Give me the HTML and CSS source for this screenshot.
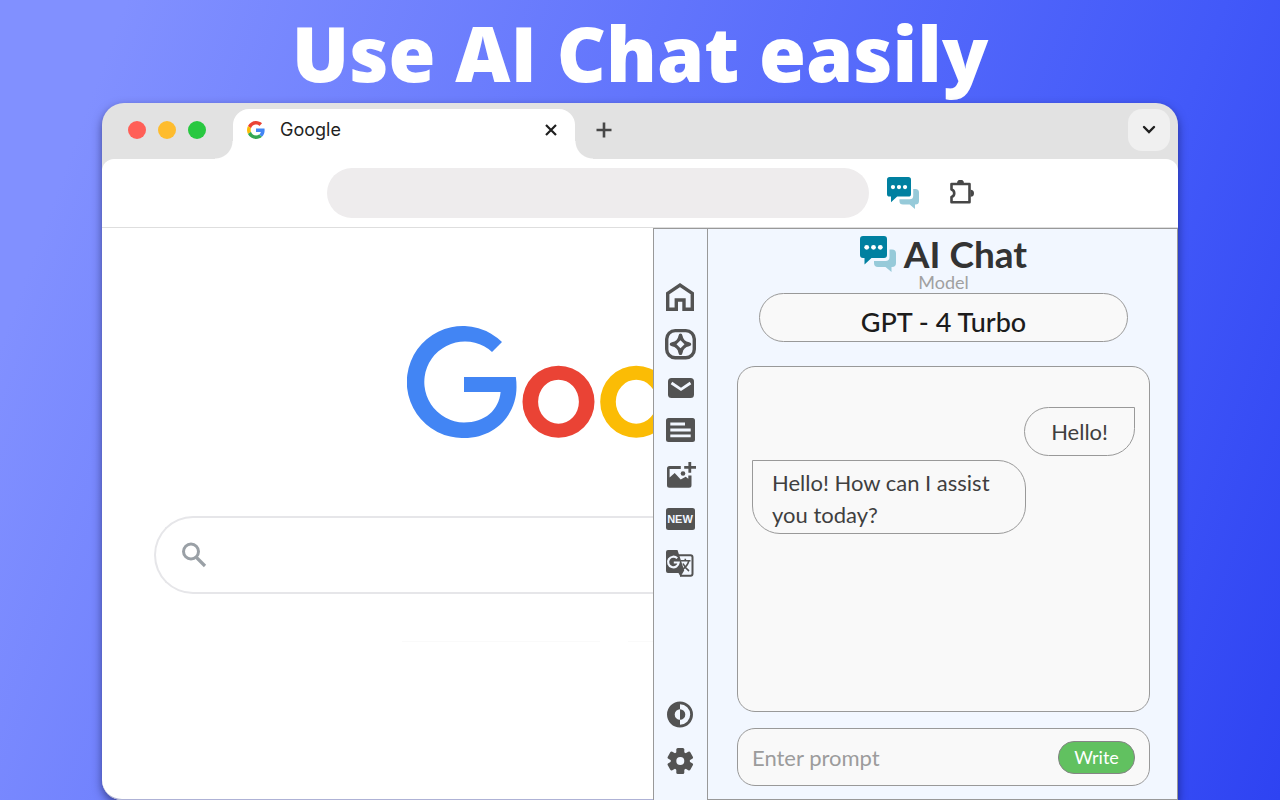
FILE: index.html
```html
<!DOCTYPE html>
<html lang="en">
<head>
    <meta charset="UTF-8">
    <meta name="viewport" content="width=device-width, initial-scale=1.0">

    <title>Use AI Chat easily</title>

    <link rel="stylesheet" href="styles.css">
</head>
<body>
    <!-- Shared chat logo -->
    <svg class="defs" aria-hidden="true">
        <symbol id="chat-logo" viewBox="0 0 36 36">
            <path fill="#0080a0" d="M3 0h21a3 3 0 0 1 3 3v16a3 3 0 0 1-3 3H11.500L4.500 28.500V22H3a3 3 0 0 1-3-3V3a3 3 0 0 1 3-3z"/>
            <g fill="#fff">
                <circle cx="6.700" cy="11.300" r="2.400"/>
                <circle cx="13.500" cy="11.300" r="2.400"/>
                <circle cx="20.300" cy="11.300" r="2.400"/>
            </g>
            <path fill="#96cad9" d="M29.500 13.500H32a4 4 0 0 1 4 4V27a4 4 0 0 1-4 4h-.500v5L25.500 31H18a4 4 0 0 1-4-4v-2h11.500a4 4 0 0 0 4-4z"/>
        </symbol>
    </svg>

    <h1 class="headline">Use AI Chat easily</h1>

    <div class="browser">
        <div class="tab-bar">
            <div class="window-dots">
                <span class="dot red"></span>
                <span class="dot yellow"></span>
                <span class="dot green"></span>
            </div>
            <div class="tab">
                <svg class="favicon" viewBox="0 0 48 48" aria-hidden="true">
                    <path fill="#ea4335" d="M24 9.500c3.540 0 6.710 1.220 9.210 3.600l6.850-6.850C35.900 2.380 30.470 0 24 0 14.620 0 6.510 5.380 2.560 13.220l7.980 6.190C12.430 13.720 17.740 9.500 24 9.500z"/>
                    <path fill="#4285f4" d="M46.980 24.550c0-1.570-.15-3.090-.38-4.550H24v9.020h12.940c-.58 2.960-2.260 5.480-4.780 7.180l7.730 6c4.510-4.180 7.090-10.360 7.090-17.650z"/>
                    <path fill="#fbbc05" d="M10.530 28.590c-.48-1.450-.76-2.990-.76-4.590s.27-3.140.76-4.590l-7.980-6.190C.92 16.460 0 20.120 0 24s.92 7.540 2.560 10.780z"/>
                    <path fill="#34a853" d="M24 48c6.480 0 11.930-2.130 15.890-5.810l-7.730-6c-2.150 1.450-4.920 2.300-8.160 2.300-6.260 0-11.570-4.220-13.470-9.910l-7.980 6.190C6.510 42.620 14.620 48 24 48z"/>
                </svg>
                <span class="tab-title">Google</span>
                <button class="icon-button close-tab" aria-label="Close tab">
                    <svg width="12" height="12" viewBox="0 0 12 12"><path d="M1 1l10 10M11 1L1 11" stroke="#1f1f1f" stroke-width="2.200"/></svg>
                </button>
            </div>
            <button class="icon-button new-tab" aria-label="New tab">
                <svg width="16" height="16" viewBox="0 0 16 16"><path d="M8 0.500v15M0.500 8h15" stroke="#474747" stroke-width="2.600"/></svg>
            </button>
            <button class="icon-button tab-menu" aria-label="Search tabs">
                <svg width="14" height="10" viewBox="0 0 14 10"><path d="M2 2l5 5 5-5" fill="none" stroke="#1f1f1f" stroke-width="2.400" stroke-linecap="round"/></svg>
            </button>
        </div>

        <div class="toolbar">
            <input class="address" type="text" aria-label="Address">
            <button class="icon-button" aria-label="AI Chat">
                <svg width="32" height="32"><use href="#chat-logo"/></svg>
            </button>
            <button class="icon-button extensions" aria-label="Extensions">
                <svg width="26" height="26" viewBox="0 0 26 26">
                    <path d="M2.500 4H20.500V22.300H2.500V17a4 4 0 0 0 0-7.600z" fill="none" stroke="#474747" stroke-width="2.600" stroke-linejoin="round"/>
                    <path d="M8 3.200a3.500 3.500 0 0 1 7 0zM21.500 9.700a3.500 3.500 0 0 1 0 7z" fill="#474747"/>
                </svg>
            </button>
        </div>

        <div class="content">
            <main class="page">
                <svg class="google-logo" width="266" height="112" viewBox="407 326 266 112" role="img" aria-label="Google">
                    <path fill="#4285f4" d="M502 342A56 56 0 1 0 464 438C496 438 516.500 414 516.500 387Q516.500 381 515.800 377H464V392H500.600C499 410 485 422.500 464 422.500A40.500 40.500 0 1 1 492 352Z"/>
                    <path fill="#ea4335" fill-rule="evenodd" d="M522.500 401.700a36 36 0 1 0 72 0a36 36 0 1 0-72 0zM538.100 401.700a20.400 22 0 1 1 40.800 0a20.400 22 0 1 1-40.800 0z"/>
                    <path fill="#fbbc05" fill-rule="evenodd" d="M600.200 401.700a36 36 0 1 0 72 0a36 36 0 1 0-72 0zM615.800 401.700a20.400 22 0 1 1 40.800 0a20.400 22 0 1 1-40.800 0z"/>
                </svg>
                <div class="search">
                    <svg width="26" height="26" viewBox="0 0 26 26" aria-hidden="true">
                        <circle cx="10" cy="9.500" r="7.500" fill="none" stroke="#9aa0a6" stroke-width="3"/>
                        <path d="M15.500 15.500l8.500 8.500" stroke="#9aa0a6" stroke-width="3.200"/>
                    </svg>
                    <input type="text" aria-label="Search">
                </div>
                <div class="page-lines">
                    <span></span>
                    <span></span>
                </div>
            </main>

            <nav class="sidebar" aria-label="AI Chat tools">
                <button class="icon-button" aria-label="Home">
                    <svg class="tool" viewBox="0 0 32 32"><path d="M3.700 27.300V11.400L16 3l12.300 8.400v15.900H20V18h-7.700v9.300z" fill="none" stroke="#535353" stroke-width="3.400"/></svg>
                </button>
                <button class="icon-button" aria-label="Assistant">
                    <svg class="tool" viewBox="0 0 32 32">
                        <rect x="2.700" y="4.600" width="27.600" height="27.200" rx="8.500" fill="none" stroke="#535353" stroke-width="3.400"/>
                        <path fill="#535353" fill-rule="evenodd" d="M16.500 7.500q1.600 0 2 2.200q1 5.600 6.600 6.600q2.200.4 2.200 2t-2.200 2q-5.600 1-6.600 6.600q-.4 2.200-2 2.200t-2-2.200q-1-5.600-6.600-6.600q-2.200-.4-2.200-2t2.200-2q5.600-1 6.600-6.600q.4-2.200 2-2.200zM16.500 14.300l-4 4l4 4l4-4z"/>
                    </svg>
                </button>
                <button class="icon-button" aria-label="Mail">
                    <svg class="tool" viewBox="0 0 32 32">
                        <rect x="4" y="8" width="26" height="20" rx="3.500" fill="#535353"/>
                        <path d="M7.500 13l9.500 6.300l9.500-6.300" fill="none" stroke="#f2f7ff" stroke-width="2.800"/>
                    </svg>
                </button>
                <button class="icon-button" aria-label="Article">
                    <svg class="tool" viewBox="0 0 32 32">
                        <rect x="2" y="4" width="29" height="24" rx="2.500" fill="#535353"/>
                        <path d="M6.300 10H21M6.300 16h20.400M6.300 21.800h20.400" stroke="#f2f7ff" stroke-width="2.800"/>
                    </svg>
                </button>
                <button class="icon-button" aria-label="Add image">
                    <svg class="tool" viewBox="0 0 32 32">
                        <path fill="#535353" d="M5.500 8H16.800v3H5.600v8.500L10.700 15l6 6.500l5-2.800l2.600 2V17.500h3.200v9.700a2.500 2.500 0 0 1-2.500 2.500H5.500A2.500 2.500 0 0 1 3 27.200V10.500A2.500 2.500 0 0 1 5.500 8z"/>
                        <circle cx="19" cy="15.500" r="2.300" fill="#535353"/>
                        <path d="M25.800 4v10.800M20.200 9.300H32" stroke="#535353" stroke-width="2.800"/>
                    </svg>
                </button>
                <button class="icon-button" aria-label="New">
                    <svg class="tool" viewBox="0 0 32 32">
                        <rect x="2" y="6" width="29" height="22" rx="2.500" fill="#535353"/>
                        <text class="new-label" x="16" y="21" text-anchor="middle">NEW</text>
                    </svg>
                </button>
                <button class="icon-button" aria-label="Translate">
                    <svg class="tool" viewBox="0 0 32 32">
                        <path d="M14 9.200h12.500a2 2 0 0 1 2 2v16.500a2 2 0 0 1-2 2H16" fill="none" stroke="#535353" stroke-width="2"/>
                        <path fill="#535353" d="M4 4h9.500l6.700 20.500L16.500 30.700L14.500 27H4a2 2 0 0 1-2-2V6a2 2 0 0 1 2-2z"/>
                        <path d="M13.200 12.300a5.300 5.300 0 1 0 1.500 4.200H9.800" fill="none" stroke="#f2f7ff" stroke-width="2.200"/>
                        <path d="M17 14.800h9.500M21.300 12.800v2M24.800 15q-1.300 5-6.300 8.500M19 17.500q2 4.500 6 7.500" fill="none" stroke="#535353" stroke-width="1.600"/>
                    </svg>
                </button>
                <span class="spacer"></span>
                <button class="icon-button" aria-label="Theme">
                    <svg class="tool" viewBox="0 0 32 32">
                        <circle cx="16" cy="14.500" r="11.600" fill="none" stroke="#535353" stroke-width="2.800"/>
                        <path fill="#535353" d="M16 2.500v6.700a5.300 5.300 0 0 0 0 10.600v6.700a12 12 0 0 1 0-24zM16 9.200a5.300 5.300 0 0 1 0 10.600z"/>
                    </svg>
                </button>
                <button class="icon-button" aria-label="Settings">
                    <svg class="tool" viewBox="0 0 32 32">
                        <g fill="#535353">
                            <circle cx="16.300" cy="17" r="9.600"/>
                            <rect x="12.300" y="4" width="8" height="26" rx="1.500"/>
                            <rect x="12.300" y="4" width="8" height="26" rx="1.500" transform="rotate(60 16.300 17)"/>
                            <rect x="12.300" y="4" width="8" height="26" rx="1.500" transform="rotate(120 16.300 17)"/>
                        </g>
                        <circle cx="16.300" cy="17" r="4" fill="#f2f7ff"/>
                    </svg>
                </button>
            </nav>

            <section class="chat">
                <h2 class="chat-title">
                    <svg width="36" height="36" aria-hidden="true"><use href="#chat-logo"/></svg>
                    AI Chat
                </h2>
                <label class="model-label" for="model">Model</label>
                <select class="model" id="model">
                    <option>GPT - 4 Turbo</option>
                </select>
                <div class="messages">
                    <p class="message user">Hello!</p>
                    <p class="message bot">Hello! How can I assist you today?</p>
                </div>
                <form class="prompt">
                    <input type="text" placeholder="Enter prompt" aria-label="Enter prompt">
                    <button type="button">Write</button>
                </form>
            </section>
        </div>
    </div>
</body>
</html>
```
FILE: styles.css
```css
* {
    box-sizing: border-box;
}

body {
    margin: 0;
    min-height: 100vh;
    display: flex;
    flex-direction: column;
    font-family: Lato, "Liberation Sans", sans-serif;
    background: linear-gradient(110deg, #8190ff 8%, #4259f9 78%, #2e43f2 100%);
}

h1, h2, p {
    margin: 0;
}

button, input, select {
    font-family: inherit;
    border: none;
    outline: none;
    background: none;
}

svg {
    display: block;
}

.defs {
    position: absolute;
    width: 0;
    height: 0;
}

.icon-button {
    padding: 0;
    display: flex;
    align-items: center;
    justify-content: center;
    cursor: pointer;
}

.headline {
    height: 103px;
    line-height: 106px;
    color: #fff;
    font-family: "Open Sans", "Liberation Sans", sans-serif;
    font-size: 76px;
    font-weight: 800;
    text-align: center;
}

/* Browser window */
.browser {
    flex: 1;
    display: flex;
    flex-direction: column;
    margin: 0 102px;
    background: #e2e2e2;
    border-radius: 22px 22px 0 20px;
    box-shadow: 0 4px 10px rgba(0, 0, 40, 0.5);
}

.tab-bar {
    display: flex;
    height: 56px;
    padding: 6px 8px 0 26px;
}

.window-dots {
    display: flex;
    gap: 12px;
    width: 105px;
    padding-top: 12px;
}

.dot {
    width: 18px;
    height: 18px;
    border-radius: 50%;
}

.red {
    background: #ff5f57;
}

.yellow {
    background: #febc2e;
}

.green {
    background: #28c840;
}

.tab {
    position: relative;
    display: flex;
    align-items: center;
    width: 342px;
    padding: 0 18px 9px 14px;
    background: #fff;
    border-radius: 16px 16px 0 0;
}

.tab::before,
.tab::after {
    content: "";
    position: absolute;
    bottom: 0;
    width: 18px;
    height: 18px;
}

.tab::before {
    right: 100%;
    background: radial-gradient(circle at 0 0, transparent 17px, #fff 18px);
}

.tab::after {
    left: 100%;
    background: radial-gradient(circle at 100% 0, transparent 17px, #fff 18px);
}

.favicon {
    width: 18px;
    height: 18px;
}

.tab-title {
    margin-left: 15px;
    color: #1f1f1f;
    font-family: Inter, "Liberation Sans", sans-serif;
    font-size: 18px;
}

.close-tab {
    margin-left: auto;
}

.new-tab {
    height: 42px;
    margin-left: 21px;
}

.tab-menu {
    width: 42px;
    height: 42px;
    margin-left: auto;
    background: #f0f0f0;
    border-radius: 14px;
}

.toolbar {
    display: flex;
    align-items: center;
    height: 69px;
    padding-left: 225px;
    background: #fff;
    border-bottom: 1px solid #dedede;
    border-radius: 12px 12px 0 0;
}

.address {
    width: 542px;
    height: 50px;
    margin-right: 18px;
    padding: 0 24px;
    font-size: 18px;
    background: #eeeced;
    border-radius: 25px;
}

.extensions {
    margin-left: 30px;
}

.content {
    flex: 1;
    display: flex;
}

/* Search page */
.page {
    flex: 1;
    min-width: 0;
    overflow: hidden;
    padding: 98px 0 0 52px;
    background: #fff;
    border-bottom: 1px solid #aeb2d6;
    border-bottom-left-radius: 20px;
}

.google-logo {
    margin-left: 253px;
}

.search {
    display: flex;
    align-items: center;
    height: 78px;
    margin-top: 78px;
    padding-left: 25px;
    border: 2px solid #e6e6e9;
    border-right: none;
    border-radius: 39px 0 0 39px;
}

.search input {
    flex: 1;
    min-width: 0;
    font-size: 22px;
}

.page-lines {
    display: flex;
    gap: 28px;
    margin: 47px 0 0 248px;
}

.page-lines span {
    flex: none;
    width: 198px;
    height: 1px;
    background: #fafafa;
}

/* Extension panel */
.sidebar {
    display: flex;
    flex-direction: column;
    align-items: center;
    gap: 12px;
    width: 55px;
    padding: 53px 2px 24px 0;
    background: #f2f7ff;
    border: 1px solid #999;
    border-bottom: none;
}

.tool {
    width: 32px;
    height: 32px;
    overflow: visible;
}

.new-label {
    fill: #f2f7ff;
    font-family: "Liberation Sans", sans-serif;
    font-size: 11px;
    font-weight: bold;
}

.spacer {
    flex: 1;
}

.chat {
    display: flex;
    flex-direction: column;
    width: 470px;
    padding: 7px 27px 13px 29px;
    background: #f2f7ff;
    border: 1px solid #999;
    border-left: none;
}

.chat-title {
    display: flex;
    align-items: center;
    justify-content: center;
    gap: 8px;
    height: 36px;
    color: #333;
    font-size: 37px;
    line-height: 34px;
    font-weight: 700;
}

.model-label {
    color: #a0a0a0;
    font-size: 18px;
    line-height: 21px;
    text-align: center;
}

.model {
    height: 49px;
    margin: 0 22px;
    padding: 7px 20px 0;
    appearance: none;
    color: #1c1c1c;
    font-size: 27px;
    font-weight: 500;
    text-align: center;
    text-align-last: center;
    background: #f9f9f9;
    border: 1px solid #999;
    border-radius: 25px;
}

.messages {
    flex: 1;
    display: flex;
    flex-direction: column;
    align-items: flex-start;
    gap: 4px;
    margin: 24px 0 16px;
    padding: 40px 14px;
    background: #f9f9f9;
    border: 1px solid #999;
    border-radius: 18px;
}

.message {
    color: #3f3f3f;
    font-size: 22px;
    line-height: 32px;
    border: 1px solid #999;
}

.user {
    align-self: flex-end;
    padding: 8px 26px 7px;
    border-radius: 25px 0 28px 25px;
}

.bot {
    width: 274px;
    padding: 6px 19px 2px;
    border-radius: 0 28px 28px 28px;
}

.prompt {
    display: flex;
    align-items: center;
    height: 58px;
    padding: 0 14px;
    background: #f9f9f9;
    border: 1px solid #999;
    border-radius: 18px;
}

.prompt input {
    flex: 1;
    min-width: 0;
    padding: 0;
    font-size: 22px;
}

.prompt input::placeholder {
    color: #9c9c9c;
}

.prompt button {
    width: 77px;
    height: 33px;
    color: #fff;
    font-size: 18px;
    background: #61c160;
    border: 1px solid #858585;
    border-radius: 16px;
    cursor: pointer;
}
```
